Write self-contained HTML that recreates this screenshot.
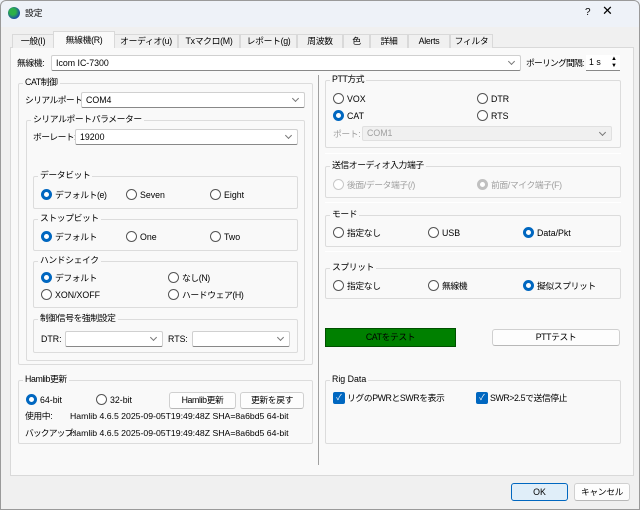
<!DOCTYPE html>
<html><head><meta charset="utf-8"><style>
*{box-sizing:border-box}
body{margin:0;width:640px;height:510px;overflow:hidden;background:#f0f0f0;font-family:"Liberation Sans","Noto Sans CJK JP",sans-serif;font-size:8.8px;color:#000;position:relative}
.a{position:absolute;white-space:nowrap}
.t{position:absolute;white-space:nowrap;line-height:12px}
.g{position:absolute;border:1px solid #dcdcdc;border-radius:2px}
.gt{position:absolute;background:#f9f9f9;padding:0 2px;line-height:12px;white-space:nowrap}
.cb{position:absolute;background:#fff;border:1px solid #d0d0d0;border-bottom-color:#888;border-radius:2px;line-height:14px;padding-left:4px}
.cb:after{content:"";position:absolute;right:6px;top:3px;width:4px;height:4px;border-right:1px solid #777;border-bottom:1px solid #777;transform:rotate(45deg)}
.r{position:absolute;width:11px;height:11px;border:1px solid #555;border-radius:50%;background:#fff}
.r.on{border:3px solid #0067c0;background:#fff}
.r.dis{border-color:#c8c8c8}
.r.don{border:3px solid #c0c0c0}
.btn{position:absolute;background:#fdfdfd;border:1px solid #d0d0d0;border-bottom-color:#b8b8b8;border-radius:3px;text-align:center;line-height:15px}
.hl{position:absolute;height:1px;background:#d4d4d4;border-bottom:1px solid #fff}
.ck{position:absolute;width:12px;height:12px;background:#0067c0;border-radius:2px;color:#fff;font-size:8px;line-height:12px;text-align:center}
.tab{position:absolute;top:34px;height:14px;line-height:13px;border:1px solid #d9d9d9;border-bottom:none;background:#f0f0f0;text-align:center;letter-spacing:-0.3px}
.dis{color:#a0a0a0}
.n{letter-spacing:-0.4px}
</style></head><body>
<div class="a" style="left:0;top:0;width:640px;height:27px;background:#eef2f8"></div>
<div class="a" style="left:8px;top:7px;width:12px;height:12px;border-radius:50%;background:radial-gradient(circle at 40% 40%,#2db04a 30%,#1d4ea8 70%)"></div>
<div class="t" style="left:25px;top:7px">設定</div>
<div class="t" style="left:585px;top:7px;font-size:10px">?</div>
<div class="t" style="left:602px;top:5px;font-size:13px">✕</div>

<div class="a" style="left:10px;top:47px;width:624px;height:429px;background:#f9f9f9;border:1px solid #d9d9d9"></div>
<div class="tab" style="left:12px;width:42px">一般(I)</div>
<div class="tab" style="left:53px;width:62px;top:31px;height:17px;background:#f9f9f9;line-height:16px">無線機(R)</div>
<div class="tab" style="left:114px;width:64px">オーディオ(u)</div>
<div class="tab" style="left:178px;width:62px">Txマクロ(M)</div>
<div class="tab" style="left:240px;width:57px">レポート(g)</div>
<div class="tab" style="left:297px;width:46px">周波数</div>
<div class="tab" style="left:343px;width:27px">色</div>
<div class="tab" style="left:370px;width:38px">詳細</div>
<div class="tab" style="left:408px;width:42px">Alerts</div>
<div class="tab" style="left:450px;width:43px">フィルタ</div>

<div class="t n" style="left:17px;top:57px">無線機:</div>
<div class="cb" style="left:51px;top:55px;width:470px;height:16px">Icom IC-7300</div>
<div class="t n" style="left:526px;top:57px;letter-spacing:-0.8px">ポーリング間隔:</div>
<div class="a" style="left:586px;top:55px;width:34px;height:16px;background:#fff;border-bottom:1px solid #888;padding-left:3px;line-height:15px">1 s<span style="position:absolute;right:3px;top:1px;font-size:6px;line-height:7px">▲<br>▼</span></div>

<div class="g" style="left:18px;top:83px;width:295px;height:282px"></div>
<div class="gt n" style="left:23px;top:76px">CAT制御</div>
<div class="t n" style="left:25px;top:94px;letter-spacing:-0.6px">シリアルポート:</div>
<div class="cb" style="left:81px;top:92px;width:224px;height:16px">COM4</div>
<div class="g" style="left:26px;top:120px;width:279px;height:241px"></div>
<div class="gt n" style="left:31px;top:113px">シリアルポートパラメーター</div>
<div class="t n" style="left:33px;top:131px;letter-spacing:-0.6px">ボーレート:</div>
<div class="cb" style="left:75px;top:129px;width:223px;height:16px">19200</div>

<div class="g" style="left:33px;top:176px;width:265px;height:33px"></div>
<div class="gt n" style="left:38px;top:169px">データビット</div>
<div class="r on" style="left:41px;top:189px"></div><div class="t n" style="left:55px;top:189px">デフォルト(e)</div>
<div class="r" style="left:126px;top:189px"></div><div class="t" style="left:140px;top:189px">Seven</div>
<div class="r" style="left:210px;top:189px"></div><div class="t" style="left:224px;top:189px">Eight</div>

<div class="g" style="left:33px;top:219px;width:265px;height:32px"></div>
<div class="gt n" style="left:38px;top:212px">ストップビット</div>
<div class="r on" style="left:41px;top:231px"></div><div class="t n" style="left:55px;top:231px">デフォルト</div>
<div class="r" style="left:126px;top:231px"></div><div class="t" style="left:140px;top:231px">One</div>
<div class="r" style="left:210px;top:231px"></div><div class="t" style="left:224px;top:231px">Two</div>

<div class="g" style="left:33px;top:261px;width:265px;height:47px"></div>
<div class="gt n" style="left:38px;top:254px">ハンドシェイク</div>
<div class="r on" style="left:41px;top:272px"></div><div class="t n" style="left:55px;top:272px">デフォルト</div>
<div class="r" style="left:168px;top:272px"></div><div class="t n" style="left:182px;top:272px">なし(N)</div>
<div class="r" style="left:41px;top:289px"></div><div class="t" style="left:55px;top:289px">XON/XOFF</div>
<div class="r" style="left:168px;top:289px"></div><div class="t n" style="left:182px;top:289px">ハードウェア(H)</div>

<div class="g" style="left:33px;top:319px;width:265px;height:34px"></div>
<div class="gt n" style="left:38px;top:312px">制御信号を強制設定</div>
<div class="t" style="left:41px;top:333px">DTR:</div>
<div class="cb" style="left:65px;top:331px;width:98px;height:16px"></div>
<div class="t" style="left:168px;top:333px">RTS:</div>
<div class="cb" style="left:192px;top:331px;width:98px;height:16px"></div>

<div class="g" style="left:18px;top:380px;width:295px;height:64px"></div>
<div class="gt n" style="left:23px;top:373px">Hamlib更新</div>
<div class="r on" style="left:26px;top:394px"></div><div class="t" style="left:40px;top:394px">64-bit</div>
<div class="r" style="left:96px;top:394px"></div><div class="t" style="left:110px;top:394px">32-bit</div>
<div class="btn n" style="left:169px;top:392px;width:67px;height:17px">Hamlib更新</div>
<div class="btn n" style="left:240px;top:392px;width:64px;height:17px">更新を戻す</div>
<div class="t n" style="left:25px;top:410px">使用中:</div>
<div class="t" style="left:70px;top:410px;font-size:8.7px">Hamlib 4.6.5 2025-09-05T19:49:48Z SHA=8a6bd5 64-bit</div>
<div class="t n" style="left:25px;top:427px;letter-spacing:-0.9px">バックアップ:</div>
<div class="t" style="left:70px;top:427px;font-size:8.7px">Hamlib 4.6.5 2025-09-05T19:49:48Z SHA=8a6bd5 64-bit</div>

<div class="a" style="left:318px;top:75px;width:1px;height:390px;background:#a0a0a0"></div>

<div class="g" style="left:325px;top:80px;width:296px;height:68px"></div>
<div class="gt n" style="left:330px;top:73px">PTT方式</div>
<div class="r" style="left:333px;top:93px"></div><div class="t" style="left:347px;top:93px">VOX</div>
<div class="r" style="left:477px;top:93px"></div><div class="t" style="left:491px;top:93px">DTR</div>
<div class="r on" style="left:333px;top:110px"></div><div class="t" style="left:347px;top:110px">CAT</div>
<div class="r" style="left:477px;top:110px"></div><div class="t" style="left:491px;top:110px">RTS</div>
<div class="t dis n" style="left:333px;top:128px">ポート:</div>
<div class="cb dis" style="left:362px;top:126px;width:250px;height:15px;background:#f0f0f0;border-color:#e0e0e0;line-height:13px">COM1</div>

<div class="hl" style="left:325px;top:153px;width:296px"></div>
<div class="g" style="left:325px;top:166px;width:296px;height:32px"></div>
<div class="gt n" style="left:330px;top:159px">送信オーディオ入力端子</div>
<div class="r dis" style="left:333px;top:179px"></div><div class="t dis n" style="left:347px;top:179px">後面/データ端子(/)</div>
<div class="r don" style="left:477px;top:179px"></div><div class="t dis n" style="left:491px;top:179px">前面/マイク端子(F)</div>

<div class="hl" style="left:325px;top:202px;width:296px"></div>
<div class="g" style="left:325px;top:215px;width:296px;height:32px"></div>
<div class="gt n" style="left:330px;top:208px">モード</div>
<div class="r" style="left:333px;top:227px"></div><div class="t n" style="left:347px;top:227px">指定なし</div>
<div class="r" style="left:428px;top:227px"></div><div class="t" style="left:442px;top:227px">USB</div>
<div class="r on" style="left:523px;top:227px"></div><div class="t" style="left:537px;top:227px">Data/Pkt</div>

<div class="hl" style="left:325px;top:251px;width:296px"></div>
<div class="g" style="left:325px;top:268px;width:296px;height:31px"></div>
<div class="gt n" style="left:330px;top:261px">スプリット</div>
<div class="r" style="left:333px;top:280px"></div><div class="t n" style="left:347px;top:280px">指定なし</div>
<div class="r" style="left:428px;top:280px"></div><div class="t n" style="left:442px;top:280px">無線機</div>
<div class="r on" style="left:523px;top:280px"></div><div class="t n" style="left:537px;top:280px">擬似スプリット</div>

<div class="a n" style="left:325px;top:328px;width:131px;height:19px;background:#008000;border:1px solid #005000;text-align:center;line-height:17px">CATをテスト</div>
<div class="btn n" style="left:492px;top:329px;width:128px;height:17px">PTTテスト</div>

<div class="g" style="left:325px;top:380px;width:296px;height:64px"></div>
<div class="gt" style="left:330px;top:373px">Rig Data</div>
<div class="ck" style="left:333px;top:392px">✓</div><div class="t n" style="left:347px;top:392px">リグのPWRとSWRを表示</div>
<div class="ck" style="left:476px;top:392px">✓</div><div class="t n" style="left:490px;top:392px">SWR&gt;2.5で送信停止</div>

<div class="btn" style="left:511px;top:483px;width:57px;height:18px;background:#e0eef9;border:1px solid #0067c0;line-height:16px">OK</div>
<div class="btn n" style="left:574px;top:483px;width:56px;height:18px;line-height:16px">キャンセル</div>
<div class="a" style="left:0;top:0;width:640px;height:510px;border:1px solid #9a9a9a;border-radius:6px 6px 0 0"></div>
</body></html>
